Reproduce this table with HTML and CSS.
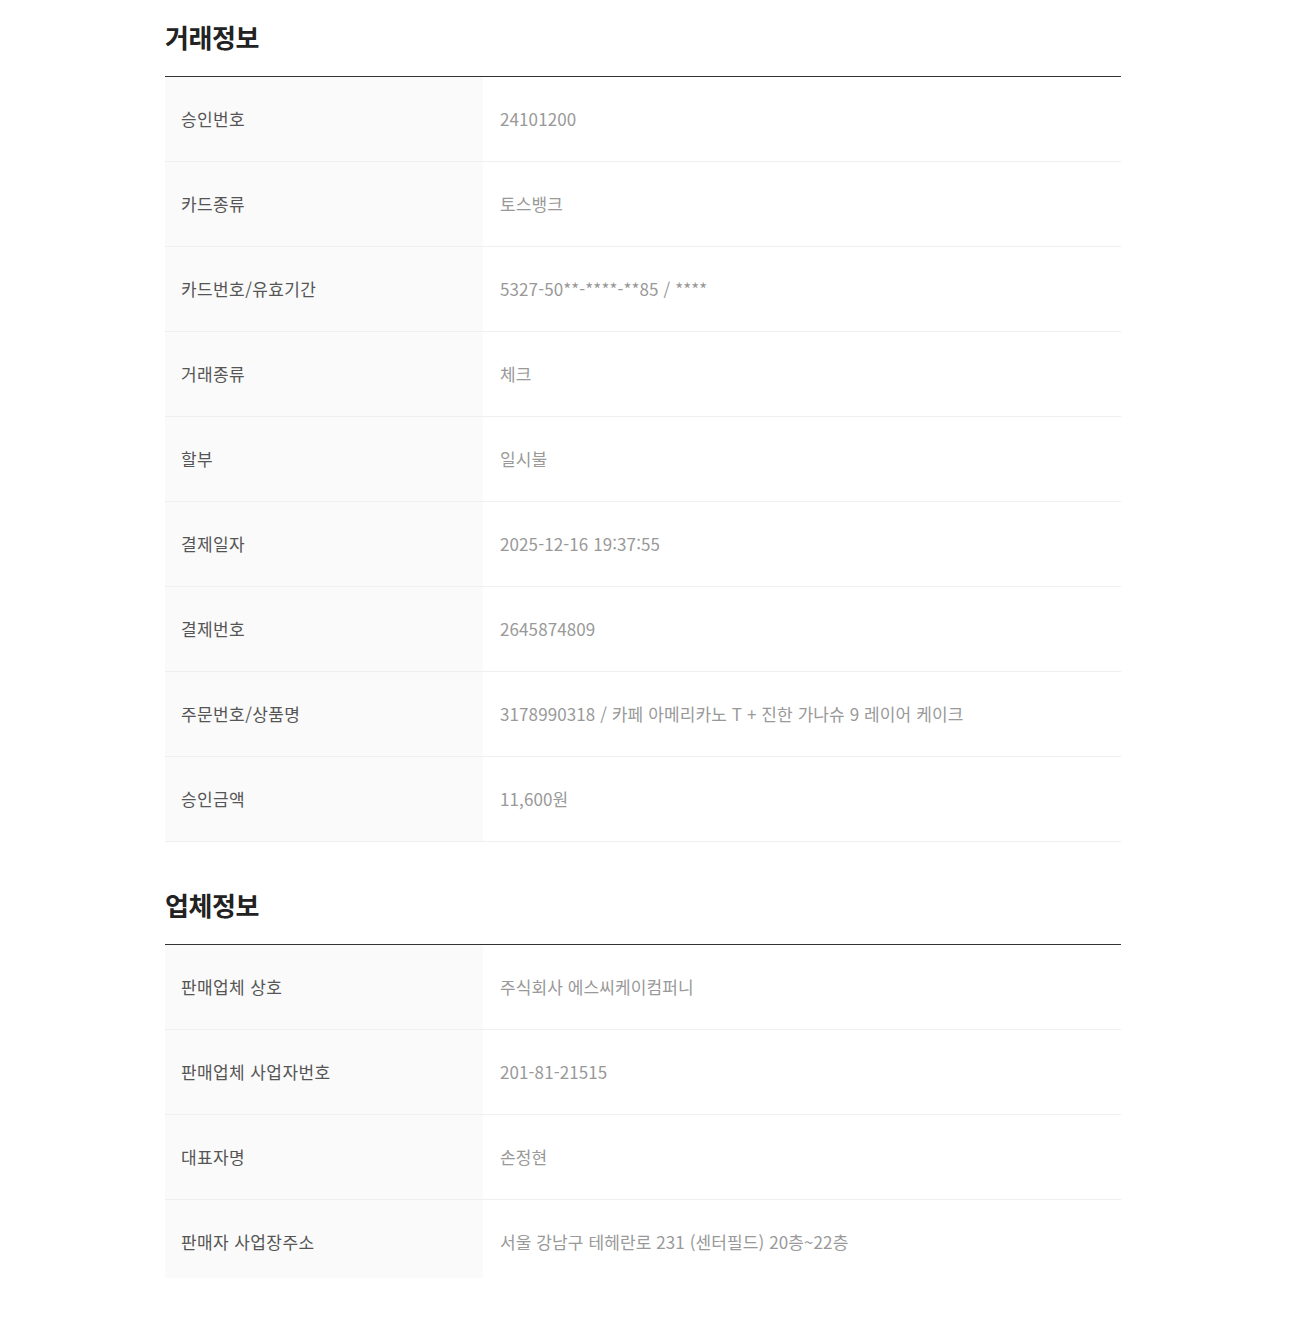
FILE: index.html
```html
<!DOCTYPE html>
<html lang="ko">
<head>
<meta charset="utf-8">
<title>거래정보</title>
<link rel="stylesheet" href="styles.css">
</head>
<body>
<div class="page">
  <section class="section">
    <h2 class="section-title">거래정보</h2>
    <div class="info-table">
      <div class="row"><div class="label">승인번호</div><div class="value">24101200</div></div>
      <div class="row"><div class="label">카드종류</div><div class="value">토스뱅크</div></div>
      <div class="row"><div class="label">카드번호/유효기간</div><div class="value">5327-50**-****-**85 / ****</div></div>
      <div class="row"><div class="label">거래종류</div><div class="value">체크</div></div>
      <div class="row"><div class="label">할부</div><div class="value">일시불</div></div>
      <div class="row"><div class="label">결제일자</div><div class="value">2025-12-16 19:37:55</div></div>
      <div class="row"><div class="label">결제번호</div><div class="value">2645874809</div></div>
      <div class="row"><div class="label">주문번호/상품명</div><div class="value">3178990318 / 카페 아메리카노 T + 진한 가나슈 9 레이어 케이크</div></div>
      <div class="row"><div class="label">승인금액</div><div class="value">11,600원</div></div>
    </div>
  </section>
  <section class="section section-company">
    <h2 class="section-title">업체정보</h2>
    <div class="info-table">
      <div class="row"><div class="label">판매업체 상호</div><div class="value">주식회사 에스씨케이컴퍼니</div></div>
      <div class="row"><div class="label">판매업체 사업자번호</div><div class="value">201-81-21515</div></div>
      <div class="row"><div class="label">대표자명</div><div class="value">손정현</div></div>
      <div class="row row-last"><div class="label">판매자 사업장주소</div><div class="value">서울 강남구 테헤란로 231 (센터필드) 20층~22층</div></div>
    </div>
  </section>
</div>
</body>
</html>
```

FILE: styles.css
```css
* { box-sizing: border-box; }
html, body { margin: 0; padding: 0; background: #fff; }
body {
  font-family: "Noto Sans CJK KR", "Noto Sans", sans-serif;
  color: #555;
}
.page {
  width: 956px;
  margin-left: 165px;
}
.section-title {
  margin: 0;
  height: 77px;
  padding-bottom: 4px;
  display: flex;
  align-items: center;
  font-size: 26px;
  font-weight: 700;
  color: #222;
  letter-spacing: -0.4px;
  border-bottom: 1px solid #333;
}
.section-company { margin-top: 26px; }
.info-table { display: flex; flex-direction: column; }
.row {
  display: grid;
  grid-template-columns: 318px 1fr;
  height: 85px;
  border-bottom: 1px solid #efefef;
}
.label {
  background: #fafafa;
  padding-left: 16px;
  padding-bottom: 2px;
  display: flex;
  align-items: center;
  font-size: 17px;
  letter-spacing: 0.4px;
  color: #555;
}
.value {
  padding-left: 17px;
  padding-bottom: 2px;
  display: flex;
  align-items: center;
  font-size: 17px;
  color: #999;
  letter-spacing: 0.1px;
}
.row-last {
  border-bottom: none;
  height: 78px;
}
.row-last .label, .row-last .value { padding-top: 5px; padding-bottom: 0; }
```
